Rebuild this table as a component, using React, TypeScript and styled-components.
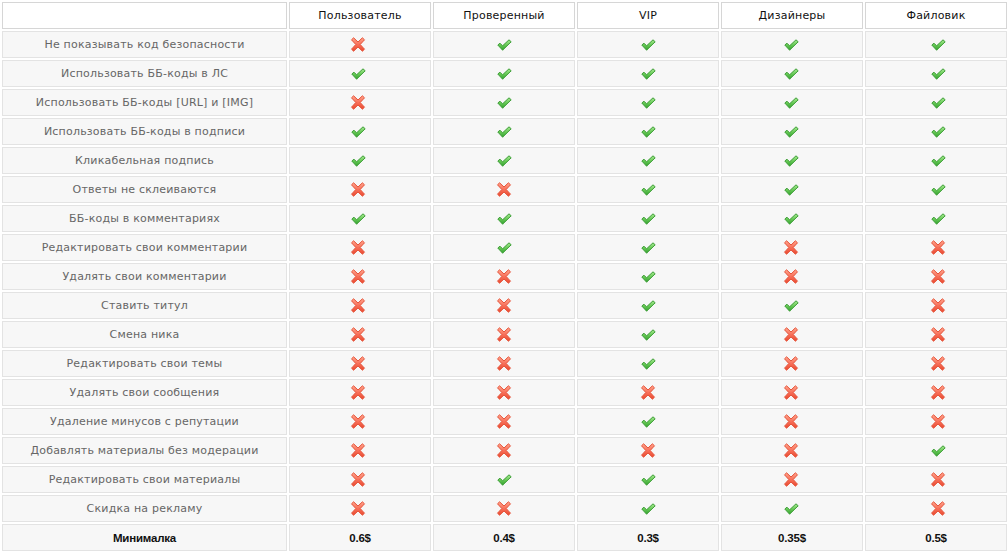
import React from "react";
import styled, { createGlobalStyle } from "styled-components";

const Global = createGlobalStyle`
  html, body { margin: 0; padding: 0; background: #ffffff; }
  body { font-family: "DejaVu Sans", Verdana, sans-serif; }
`;

const Table = styled.div`
  display: grid;
  grid-template-columns: 285px repeat(5, 142px);
  grid-auto-rows: 27px;
  gap: 2px;
  padding: 2px;
  width: max-content;
`;

const Cell = styled.div<{ $head?: boolean }>`
  box-sizing: border-box;
  display: flex;
  align-items: center;
  justify-content: center;
  border: 1px solid ${(p) => (p.$head ? "#d6d6d6" : "#e3e3e3")};
  background: ${(p) => (p.$head ? "#ffffff" : "#f7f7f7")};
`;

const HeadText = styled.span`
  font-family: "DejaVu Sans", Verdana, sans-serif;
  font-size: 11px;
  color: #111;
  letter-spacing: 0.2px;
`;

const Label = styled.span`
  font-family: "DejaVu Sans", Verdana, sans-serif;
  font-size: 11px;
  color: #666666;
  letter-spacing: 0.2px;
`;

const Strong = styled.span`
  font-family: "Liberation Sans", Arial, sans-serif;
  font-weight: bold;
  font-size: 11.5px;
  color: #111;
  letter-spacing: -0.2px;
`;

const IconWrap = styled.span<{ $nudge: number }>`
  display: inline-flex;
  transform: translateX(${(p) => p.$nudge}px);
`;

const Cross = () => (
  <svg width="16" height="15" viewBox="0 0 16 15">
    <defs>
      <linearGradient id="xg" x1="0" y1="0" x2="0" y2="1">
        <stop offset="0" stopColor="#ffa48c" />
        <stop offset="0.5" stopColor="#f8705a" />
        <stop offset="1" stopColor="#e94a30" />
      </linearGradient>
    </defs>
    <polygon
      points="1.5,2.8 3.6,0.8 8,5 12.4,0.8 14.5,2.8 10.2,7.5 14.5,12.2 12.4,14.2 8,10 3.6,14.2 1.5,12.2 5.8,7.5"
      fill="url(#xg)"
      stroke="#e5533a"
      strokeWidth="1"
      strokeLinejoin="round"
    />
  </svg>
);

const Check = () => (
  <svg width="15" height="12" viewBox="0 0 15 12">
    <defs>
      <linearGradient id="cg" x1="0" y1="0" x2="0" y2="1">
        <stop offset="0" stopColor="#a8ea92" />
        <stop offset="0.55" stopColor="#62c652" />
        <stop offset="1" stopColor="#34a030" />
      </linearGradient>
    </defs>
    <polygon
      points="0.8,6 3,4.2 5.6,6.8 12,0.8 14.2,2.8 5.6,11.2"
      fill="url(#cg)"
      stroke="#3e9e38"
      strokeWidth="1"
      strokeLinejoin="round"
    />
  </svg>
);

const columns = ["Пользователь", "Проверенный", "VIP", "Дизайнеры", "Файловик"];
const nudges = [-2, 0, 0, -1, 2];

const rows: [string, string][] = [
  ["Не показывать код безопасности", "xvvvv"],
  ["Использовать ББ-коды в ЛС", "vvvvv"],
  ["Использовать ББ-коды [URL] и [IMG]", "xvvvv"],
  ["Использовать ББ-коды в подписи", "vvvvv"],
  ["Кликабельная подпись", "vvvvv"],
  ["Ответы не склеиваются", "xxvvv"],
  ["ББ-коды в комментариях", "vvvvv"],
  ["Редактировать свои комментарии", "xvvxx"],
  ["Удалять свои комментарии", "xxvxx"],
  ["Ставить титул", "xxvvx"],
  ["Смена ника", "xxvxx"],
  ["Редактировать свои темы", "xxvxx"],
  ["Удалять свои сообщения", "xxxxx"],
  ["Удаление минусов с репутации", "xxvxx"],
  ["Добавлять материалы без модерации", "xxxxv"],
  ["Редактировать свои материалы", "xvvxx"],
  ["Скидка на рекламу", "xxvvx"],
];

const prices = ["0.6$", "0.4$", "0.3$", "0.35$", "0.5$"];

export default function App() {
  return (
    <>
      <Global />
      <Table>
        <Cell $head />
        {columns.map((c) => (
          <Cell $head key={c}>
            <HeadText>{c}</HeadText>
          </Cell>
        ))}
        {rows.map(([label, marks]) => (
          <React.Fragment key={label}>
            <Cell>
              <Label>{label}</Label>
            </Cell>
            {marks.split("").map((m, i) => (
              <Cell key={i}>
                <IconWrap $nudge={nudges[i]}>{m === "v" ? <Check /> : <Cross />}</IconWrap>
              </Cell>
            ))}
          </React.Fragment>
        ))}
        <Cell>
          <Strong>Минималка</Strong>
        </Cell>
        {prices.map((p) => (
          <Cell key={p}>
            <Strong>{p}</Strong>
          </Cell>
        ))}
      </Table>
    </>
  );
}
